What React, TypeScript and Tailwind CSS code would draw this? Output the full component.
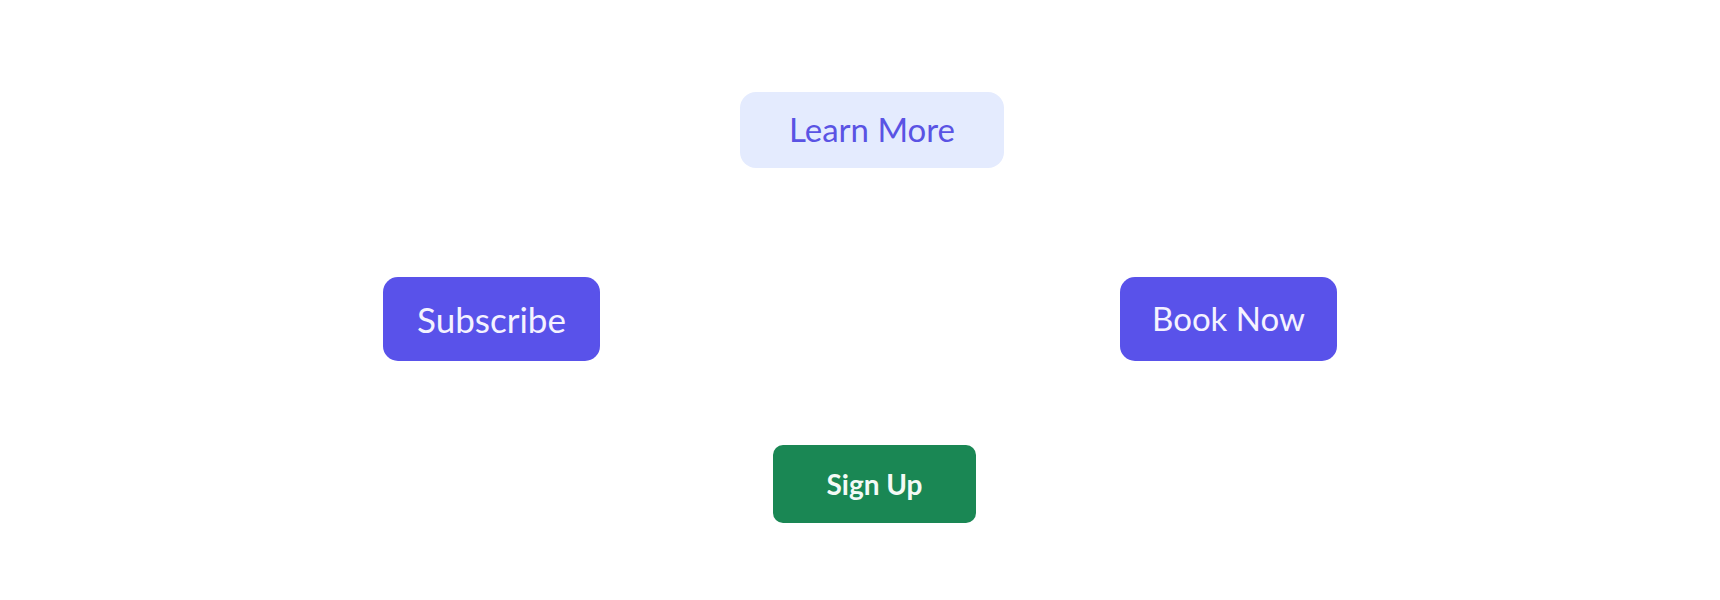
export default function App() {
  const font = { fontFamily: '"Lato", "Liberation Sans", sans-serif' };
  return (
    <div className="w-full h-[600px] bg-white pt-[92px]" style={font}>
      <div className="flex pl-[740px]">
        <button className="w-[264px] h-[76px] rounded-[16px] bg-[#e4ebfe] text-[#5a53e4] text-[33px] flex items-center justify-center">
          Learn More
        </button>
      </div>
      <div className="flex pl-[383px] gap-[520px] mt-[109px]">
        <button className="w-[217px] h-[84px] rounded-[15px] bg-[#5952ea] text-[#f4f2ff] text-[35px] flex items-center justify-center">
          Subscribe
        </button>
        <button className="w-[217px] h-[84px] rounded-[15px] bg-[#5952ea] text-[#f4f2ff] text-[33px] flex items-center justify-center">
          Book Now
        </button>
      </div>
      <div className="flex pl-[773px] mt-[84px]">
        <button className="w-[203px] h-[78px] rounded-[10px] bg-[#1a8754] text-[#f4faf6] text-[28px] font-bold flex items-center justify-center">
          Sign Up
        </button>
      </div>
    </div>
  );
}
